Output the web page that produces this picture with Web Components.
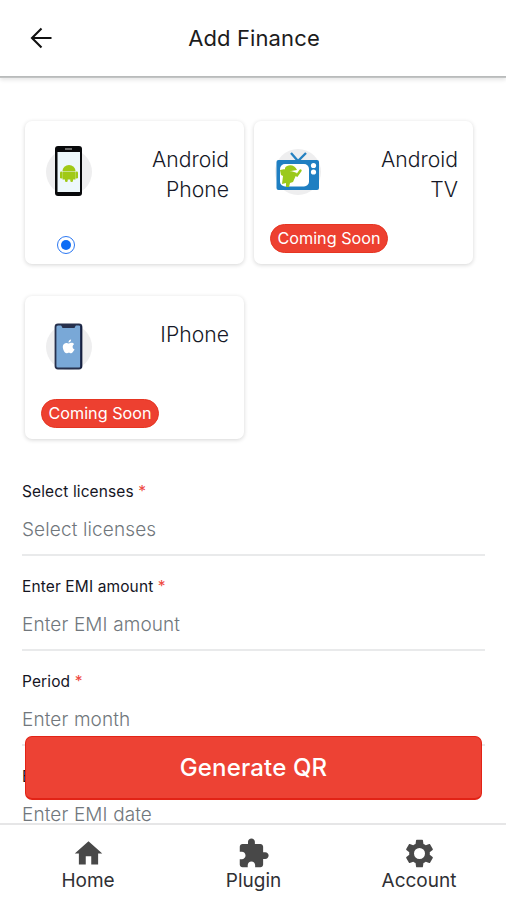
<!DOCTYPE html>
<html lang="en">
<head>
<meta charset="utf-8">
<title>Add Finance</title>
<style>
html,body{margin:0;height:100%;background:#fff}
body{font-family:Inter,"Liberation Sans",sans-serif;overflow:hidden}
</style>
</head>
<body>
<finance-app></finance-app>
<script>
function define(name, html) {
  const t = document.createElement('template');
  t.innerHTML = html;
  customElements.define(name, class extends HTMLElement {
    constructor() {
      super();
      this.attachShadow({ mode: 'open' }).appendChild(t.content.cloneNode(true));
    }
  });
}

define('app-header', `
<style>
:host{display:flex;align-items:center;box-sizing:border-box;padding:0 25px;background:#fff;border-bottom:1px solid #b9bbbb;box-shadow:0 1px 0 #c2c4c4,0 3px 4px rgba(0,0,0,.1);position:relative;height:77px}
svg{width:32px;height:32px}
h1{flex:1;margin:0 30px 0 0;text-align:center;font-weight:400;font-size:22px;line-height:28px;letter-spacing:.12px;color:#1c1c1c}
</style>
<svg viewBox="0 0 32 32" fill="none" stroke="#111" stroke-width="2.1"><path d="M26.500 16H7M16.500 6.500 7 16l9.500 9.500"/></svg>
<h1><slot></slot></h1>`);

define('device-card', `
<style>
:host{display:flex;flex-direction:column;justify-content:space-between;box-sizing:border-box;width:219px;height:143px;border-radius:7px;background:#fff;box-shadow:0 1px 4px rgba(0,0,0,.17);padding:24px 15px 11px 20px}
.top{display:flex;justify-content:space-between;align-items:flex-start}
.name{width:90px;text-align:right;font-size:21.200px;line-height:29.500px;font-weight:300;color:#161827}
.bottom{display:flex}
::slotted(svg){width:48px;height:52px;flex:none}
</style>
<div class="top"><slot name="icon"></slot><div class="name"><slot></slot></div></div>
<div class="bottom"><slot name="state"></slot></div>`);

define('soon-badge', `
<style>
:host{display:flex;justify-content:center;box-sizing:border-box;width:118px;height:29px;margin-left:-4px;border-radius:15px;background:#ed4030;border:1px solid #e63522;color:#fff;font-size:16.200px;line-height:27px;white-space:nowrap}
</style><slot></slot>`);

define('radio-dot', `
<style>
:host{display:block;box-sizing:border-box;width:18px;height:18px;border:1.500px solid #2c78f2;border-radius:50%;margin:0 0 -1px 12px;padding:3px}
i{display:block;height:100%;border-radius:50%;background:#0d6df5}
</style><i></i>`);

define('form-field', `
<style>
:host{display:block;box-sizing:border-box;height:95px;border-bottom:2px solid #e9eaeb;padding-top:20px;margin:0 21px 0 22px}
label{display:block;font-size:15.500px;line-height:22px;letter-spacing:.12px;color:#15151f;white-space:pre}
b{font-weight:400;color:#ee4740}
.ph{font-size:19px;line-height:26px;margin-top:14px;color:#71777c;font-weight:300;letter-spacing:.12px}
</style>
<label><slot name="label"></slot><b> *</b></label><div class="ph"><slot></slot></div>`);

define('primary-button', `
<style>
:host{display:flex;align-items:center;justify-content:center;box-sizing:border-box;height:64px;border-radius:7px;background:#ed4234;border:1px solid #e22316;border-bottom-width:2px;color:#fff;font-size:24px;letter-spacing:.15px;font-weight:500}
</style><slot></slot>`);

define('nav-item', `
<style>
:host{display:flex;flex-direction:column;align-items:center;width:120px;color:#303034;font-size:19px;line-height:24px}
::slotted(svg){width:33px;height:33px;fill:#484848;margin-bottom:-1px}
</style><slot name="icon"></slot><span><slot></slot></span>`);

define('bottom-nav', `
<style>
:host{display:flex;justify-content:space-between;box-sizing:border-box;height:77px;padding:12px 27px 0 28px;background:#fff;border-top:2px solid #e6e6e7}
</style><slot></slot>`);

define('finance-app', `
<style>
:host{display:block;position:relative;width:506px;height:900px;overflow:hidden;background:#fff}
.cards{display:grid;grid-template-columns:219px 219px;column-gap:10px;row-gap:32px;padding:44px 0 0 25px}
form{display:block;margin:22px 0 0}
.dock{position:absolute;left:0;right:0;bottom:0}
.dock primary-button{margin:0 24px 23px 25px}
</style>
<app-header>Add Finance</app-header>
<div class="cards">
 <device-card>Android Phone
  <svg slot="icon" viewBox="0 0 48 52"><circle cx="24" cy="27" r="23" fill="#eeeeef"/><rect x="10" y="1" width="27" height="50" rx="3" fill="#08090b"/><path fill="#edf7fb" d="M12.500 7h22.500v40H12.500z"/><path d="M20 4h7" stroke="#aaa" stroke-width="1.200"/><g fill="#a0c916"><path d="M17.500 26a6.500 6 0 0 1 13 0z"/><path d="M17.500 26.500h13v8h-13z"/><rect x="15" y="26.500" width="2.500" height="7" rx="1.200"/><rect x="30.500" y="26.500" width="2.500" height="7" rx="1.200"/><rect x="20" y="32" width="2.700" height="5" rx="1.200"/><rect x="25.300" y="32" width="2.700" height="5" rx="1.200"/></g></svg>
  <radio-dot slot="state"></radio-dot></device-card>
 <device-card>Android TV
  <svg slot="icon" viewBox="0 0 48 52"><circle cx="24" cy="27" r="23" fill="#eeeeef"/><path d="m17 8 7 8 8-8" fill="none" stroke="#2581c1" stroke-width="2.300"/><rect x="2.500" y="15" width="42.500" height="30" rx="2" fill="#1f7fc2"/><rect x="6" y="19" width="29" height="22.500" rx="5" fill="#fff"/><circle cx="39.500" cy="20.500" r="2.600" fill="#fff"/><circle cx="39.500" cy="27" r="2.600" fill="#fff"/><g fill="#9bc91b"><path d="M11 23c2-4 10-4 12 2l-12 2zM6 25l5-1 12 4-4 9-3 1-1 4h-3v-4l-4 1 1-8-2-1z"/><path d="m20 29 3 1.500 3.500-5" fill="none" stroke="#9bc91b" stroke-width="2.400" stroke-linecap="round"/></g></svg>
  <soon-badge slot="state">Coming Soon</soon-badge></device-card>
 <device-card>IPhone
  <svg slot="icon" viewBox="0 0 48 52"><circle cx="24" cy="27" r="23" fill="#eeeeef"/><rect x="10.500" y="4.500" width="26" height="44" rx="2.500" fill="#79a8d7" stroke="#26304d" stroke-width="1.800"/><path d="M36 6v42" stroke="#121b3c" stroke-width="1.500"/><path d="M16 5h15l-1.500 3h-12z" fill="#26304d"/><g transform="translate(16.500 19.500) scale(.65)" fill="#fff"><path d="M18.700 17.200c-.6 1.300-2.100 4-4 4.100-1.300.1-1.800-.8-3.400-.8s-2.100.8-3.400.8C4.200 21.200 1 12.700 2.300 9.200c.8-2.500 2.900-4 4.900-4 1.600 0 2.800 1 4.100 1 1.200 0 2.400-1.100 4.300-1.100 1.400 0 2.900.8 3.800 2.100-3.400 2-2.800 6.500.7 8-.3.700-.8 1.300-1.400 2zM14.800 0c.3 2.300-1.700 4.800-4 4.700C10.500 2.400 12.400.3 14.800 0z"/></g></svg>
  <soon-badge slot="state">Coming Soon</soon-badge></device-card>
</div>
<form>
 <form-field><span slot="label">Select licenses</span>Select licenses</form-field>
 <form-field><span slot="label">Enter EMI amount</span>Enter EMI amount</form-field>
 <form-field><span slot="label">Period</span>Enter month</form-field>
 <form-field><span slot="label">EMI date</span>Enter EMI date</form-field>
</form>
<div class="dock">
 <primary-button>Generate QR</primary-button>
 <bottom-nav>
  <nav-item><svg slot="icon" viewBox="0 0 24 24"><path d="M10 20v-6h4v6h5v-8h3L12 3 2 12h3v8z"/></svg>Home</nav-item>
  <nav-item><svg slot="icon" viewBox="0 0 24 24"><path d="M20.500 11H19V7c0-1.100-.9-2-2-2h-4V3.500C13 2.120 11.880 1 10.500 1S8 2.120 8 3.500V5H4c-1.100 0-1.990.9-1.990 2v3.800H3.500c1.490 0 2.700 1.210 2.700 2.700s-1.210 2.700-2.700 2.700H2V20c0 1.100.9 2 2 2h3.800v-1.500c0-1.490 1.210-2.700 2.700-2.700s2.700 1.210 2.700 2.700V22H17c1.100 0 2-.9 2-2v-4h1.500c1.380 0 2.500-1.120 2.500-2.500S21.880 11 20.500 11z"/></svg>Plugin</nav-item>
  <nav-item><svg slot="icon" viewBox="0 0 24 24"><path d="M19.430 12.980c.04-.32.07-.64.07-.98s-.03-.66-.07-.98l2.110-1.650c.19-.15.24-.42.12-.64l-2-3.460c-.12-.22-.39-.3-.61-.22l-2.490 1c-.52-.4-1.080-.73-1.690-.98l-.38-2.650C14.460 2.180 14.250 2 14 2h-4c-.25 0-.46.18-.49.42l-.38 2.650c-.61.25-1.170.59-1.690.98l-2.490-1c-.23-.09-.49 0-.61.22l-2 3.460c-.13.22-.07.49.12.64l2.110 1.650c-.04.32-.07.65-.07.98s.03.66.07.98l-2.110 1.650c-.19.15-.24.42-.12.64l2 3.460c.12.22.39.3.61.22l2.490-1c.52.4 1.080.73 1.690.98l.38 2.650c.03.24.24.42.49.42h4c.25 0 .46-.18.49-.42l.38-2.650c.61-.25 1.170-.59 1.690-.98l2.490 1c.23.09.49 0 .61-.22l2-3.460c.12-.22.07-.49-.12-.64zM12 16a4 4 0 1 1 0-8 4 4 0 0 1 0 8z"/></svg>Account</nav-item>
 </bottom-nav>
</div>`);
</script>
</body>
</html>
